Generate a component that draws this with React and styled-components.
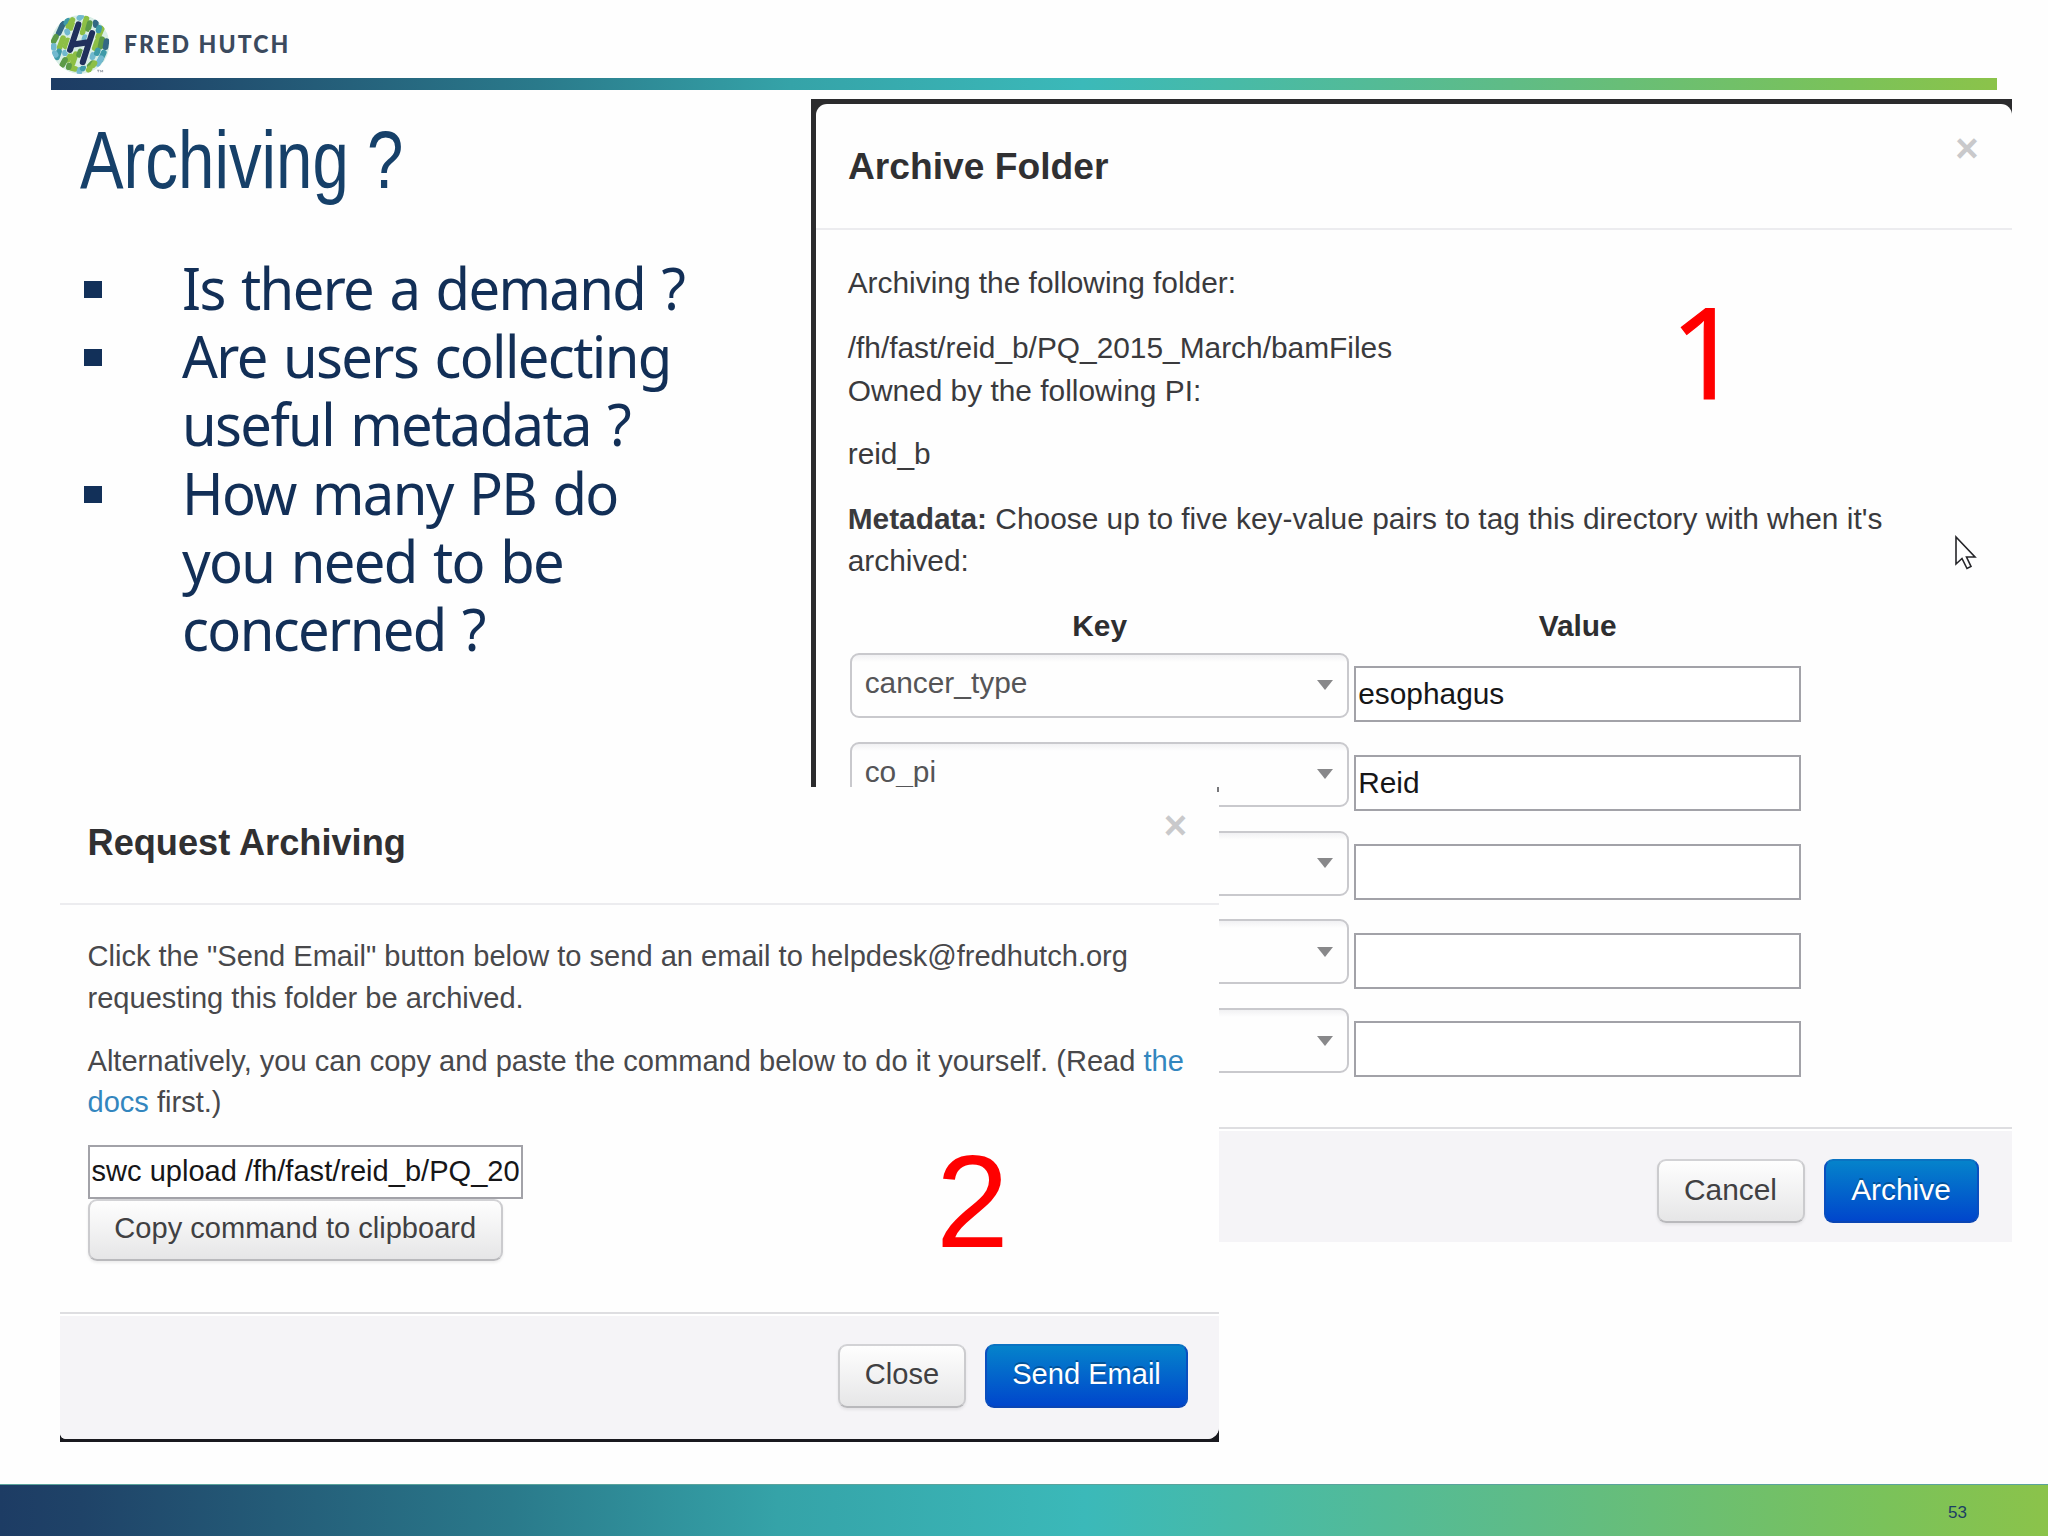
import React from "react";
import styled, { createGlobalStyle, css } from "styled-components";

const Global = createGlobalStyle`
  * { box-sizing: border-box; }
  body { margin: 0; background: #fefefe; }
`;

const sans = `"Liberation Sans", Arial, sans-serif`;
const brandGradient = css`
  background: linear-gradient(90deg, #1d3c64 0%, #1f4368 4%, #2a7a8b 25%, #35a3a8 38%, #3bb9b9 53%, #5fbc86 75%, #7ac25a 92%, #8bc34a 100%);
`;

const Slide = styled.div`
  position: relative;
  width: 2048px;
  height: 1536px;
  overflow: hidden;
  display: flex;
  flex-direction: column;
  background: #fefefe;
  font-family: ${sans};
`;

const Brand = styled.header`
  height: 78px;
  padding: 13px 0 0 51px;
  display: flex;
  align-items: flex-start;
`;

const BrandName = styled.span`
  margin: 14px 0 0 13px;
  font: 900 24.5px/34px Lato, "Open Sans", sans-serif;
  letter-spacing: 2.2px;
  color: #3b4a5e;
  white-space: nowrap;
  transform: scaleX(0.94);
  transform-origin: 0 0;
`;

const BrandBar = styled.div`
  height: 12px;
  margin: 0 51px;
  ${brandGradient}
`;

const Main = styled.main`
  flex: 1;
  padding: 22px 0 0 80px;
`;

const Title = styled.h1`
  margin: 0;
  font-size: 82px;
  font-weight: 400;
  line-height: 96px;
  color: #164069;
  white-space: nowrap;
  width: 420px;
  transform: scaleX(0.797);
  transform-origin: 0 0;
`;

const Points = styled.ul`
  list-style: none;
  margin: 45px 0 0;
  padding: 0;
  width: 640px;
`;

const Point = styled.li`
  display: flex;
  align-items: flex-start;
  padding-left: 4px;
`;

const Marker = styled.span`
  flex: none;
  width: 18px;
  height: 17px;
  margin: 28px 80px 0 0;
  background: #123059;
`;

const PointText = styled.div`
  width: 560px;
  font: 400 58.5px/68.2px "Noto Sans", "Open Sans", sans-serif;
  letter-spacing: -1.7px;
  word-spacing: 3.4px;
  white-space: nowrap;
  color: #122f57;
  transform: scaleX(0.96);
  transform-origin: 0 0;
`;

const Footer = styled.footer`
  height: 52px;
  flex: none;
  padding: 4px 81px 0 0;
  display: flex;
  align-items: center;
  justify-content: flex-end;
  font-size: 17px;
  color: #1b3f63;
  border-top: 1px solid #5aa39c;
  ${brandGradient}
`;

const Frame = styled.section`
  position: absolute;
  left: ${(p) => p.$x}px;
  top: ${(p) => p.$y}px;
  width: ${(p) => p.$w}px;
  height: ${(p) => p.$h}px;
  padding: ${(p) => p.$edge};
  background: ${(p) => p.$edgeColor};
`;

const Panel = styled.div`
  height: 100%;
  display: flex;
  flex-direction: column;
  background: #fefefe;
  border-radius: ${(p) => p.$radius};
  overflow: hidden;
  color: ${(p) => p.$ink};
  font-size: ${(p) => p.$size}px;
  line-height: ${(p) => p.$leading}px;
`;

const PanelHead = styled.header`
  height: ${(p) => p.$h}px;
  flex: none;
  display: flex;
  justify-content: space-between;
  align-items: flex-start;
  padding: ${(p) => p.$pad};
  border-bottom: 2px solid #ececef;
`;

const PanelTitle = styled.h2`
  margin: 0;
  font-size: ${(p) => p.$size}px;
  line-height: 64px;
  font-weight: 700;
  color: #303032;
`;

const Dismiss = styled.button`
  margin: ${(p) => p.$top}px 0 0;
  padding: 0;
  border: 0;
  background: none;
  font: 700 40px/40px ${sans};
  color: #c9c9cb;
`;

const PanelBody = styled.div`
  flex: 1;
  padding: ${(p) => p.$pad};
`;

const Para = styled.p`
  margin: 0 0 ${(p) => (p.$tight ? 0 : p.$gap)}px;
  white-space: nowrap;
`;

const DocLink = styled.a`
  color: #3386be;
`;

const Pairs = styled.div`
  display: grid;
  grid-template-columns: 499px 447px;
  column-gap: 5px;
  margin-left: 2.5px;
`;

const ColumnHead = styled.div`
  height: 47.5px;
  font-weight: 700;
  text-align: center;
  color: #2e2e30;
`;

const Cell = styled.div`
  height: 88.8px;
  padding-top: ${(p) => p.$drop || 0}px;
`;

const Select = styled.div`
  height: 65px;
  padding: 0 14px 4px 12.5px;
  display: flex;
  align-items: center;
  justify-content: space-between;
  border: 2px solid #c9c9cd;
  border-radius: 9px;
  background: linear-gradient(#f1f1f3 0, #fefefe 7px);
  color: #555557;
`;

const Caret = styled.span`
  margin-top: 4px;
  border: solid transparent;
  border-width: 10px 8px 0;
  border-top-color: #88888a;
`;

const Field = styled.input`
  display: block;
  width: ${(p) => p.$w};
  height: ${(p) => p.$h}px;
  padding: 0 2px 1px;
  border: 2px solid #a2a2a8;
  border-radius: 0;
  background: #fff;
  outline: 0;
  font: 400 ${(p) => p.$size}px ${sans};
  color: #161618;
`;

const PanelFoot = styled.footer`
  height: ${(p) => p.$h}px;
  flex: none;
  display: flex;
  justify-content: flex-end;
  align-items: flex-start;
  gap: 19px;
  padding: 30px ${(p) => p.$right}px 0 0;
  border-top: 2px solid #dedee1;
  background: #f5f4f7;
  box-shadow: inset 0 2px 0 #fff;
`;

const Button = styled.button`
  width: ${(p) => p.$w}px;
  height: ${(p) => p.$h || 64}px;
  padding: 0 0 3px;
  border: 2px solid;
  border-radius: 9px;
  font: 400 ${(p) => p.$size}px ${sans};
  white-space: nowrap;
  ${(p) =>
    p.$primary
      ? css`
          color: #fff;
          border-color: #0a73c2 #0a4fbf #0a45b4;
          background: linear-gradient(#0585cb, #0044cc) border-box;
          text-shadow: 0 -2px 0 rgba(0, 0, 0, 0.25);
        `
      : css`
          color: #404042;
          border-color: #d2d2d5 #cbcbce #b9b9bc;
          background: linear-gradient(#fefefe, #e6e6e7);
          box-shadow: 0 2px 3px rgba(0, 0, 0, 0.07);
        `}
`;

const StepNumber = styled.div`
  position: absolute;
  left: ${(p) => p.$x}px;
  top: ${(p) => p.$y}px;
  font-family: ${(p) => p.$face || sans};
  font-size: ${(p) => p.$size}px;
  line-height: 140px;
  color: #ff0000;
  -webkit-text-stroke: ${(p) => p.$stroke || 0}px #ff0000;
`;

const Pointer = styled.svg`
  position: absolute;
  left: 1954px;
  top: 535px;
`;

const CornerTick = styled.i`
  position: absolute;
  right: 0;
  top: 0;
  width: 2px;
  height: 5px;
  background: #77777a;
`;

const G = "#8dbf45";
const D = "#5c9a48";
const T = "#3f9aa8";
const L = "#72b9cf";
const N = "#336884";
const strokes = [
  [70, 72, 57, 100, N], [84, 62, 80, 70, T], [98, 61, 92, 72, G], [124, 50, 119, 55, L],
  [93, 84, 86, 80, G], [82, 95, 83, 98, L], [70, 115, 60, 142, G], [49, 111, 42, 124, D],
  [42, 138, 42, 144, L], [84, 122, 78, 140, G], [103, 77, 101, 84, G], [58, 155, 52, 172, T],
  [45, 160, 48, 165, L], [76, 158, 76, 160, L], [92, 168, 84, 180, G], [76, 180, 68, 195, D],
  [108, 163, 98, 192, G], [122, 155, 118, 165, D], [107, 207, 95, 204, G], [120, 210, 119, 216, L],
  [88, 197, 87, 202, D], [140, 56, 128, 98, G], [150, 70, 145, 88, D], [168, 68, 168, 76, N],
  [186, 86, 175, 112, G], [178, 84, 176, 92, T], [172, 125, 165, 145, G], [187, 118, 182, 140, D],
  [200, 124, 197, 142, N], [160, 165, 158, 172, L], [174, 152, 171, 160, T], [192, 158, 182, 180, T],
  [184, 175, 174, 192, L], [158, 190, 150, 198, D], [150, 205, 147, 210, G], [136, 112, 134, 118, L],
  [164, 190, 160, 196, G], [130, 204, 129, 206, T], [122, 84, 124, 82, G],
];

const Logo = () => (
  <svg width="59.5" height="63" viewBox="34 40 178 188" aria-label="Fred Hutch">
    <clipPath id="disc">
      <circle cx="121" cy="134" r="88" />
    </clipPath>
    <g clipPath="url(#disc)" strokeLinecap="round" strokeWidth="17">
      <circle cx="121" cy="134" r="88" fill="#d9eee6" />
      {strokes.map(([a, b, c, d, color], i) => (
        <line key={i} x1={a} y1={b} x2={c} y2={d} stroke={color} />
      ))}
      <g stroke="#20305c" strokeWidth="18">
        <g stroke="#e8f4ee" strokeWidth="22">
          <line x1="116" y1="74" x2="91" y2="150" />
          <line x1="157" y1="100" x2="129" y2="187" />
        </g>
        <line x1="116" y1="74" x2="91" y2="150" />
        <line x1="157" y1="100" x2="129" y2="187" />
        <line x1="100" y1="134" x2="146" y2="127" />
      </g>
    </g>
    <path d="M172 211h7m-3.500 0v6m7 0v-6l3 4 3-4v6" fill="none" stroke="#77808c" strokeWidth="2" />
  </svg>
);

const pairs = ["cancer_type", "co_pi", "", "", ""];
const values = ["esophagus", "Reid", "", "", ""];

export default function App() {
  return (
    <Slide>
      <Global />
      <Brand>
        <Logo />
        <BrandName>FRED HUTCH</BrandName>
      </Brand>
      <BrandBar />
      <Main>
        <Title>Archiving ?</Title>
        <Points>
          <Point>
            <Marker />
            <PointText>Is there a demand ?</PointText>
          </Point>
          <Point>
            <Marker />
            <PointText>
              Are users collecting
              <br />
              useful metadata ?
            </PointText>
          </Point>
          <Point>
            <Marker />
            <PointText>
              How many PB do
              <br />
              you need to be
              <br />
              concerned ?
            </PointText>
          </Point>
        </Points>
      </Main>
      <Footer>53</Footer>

      <Frame $x={811} $y={99} $w={1200.5} $h={1142.5} $edge="5px 0 0 5px" $edgeColor="#2b2b2d">
        <Panel $radius="11px 11px 0 0" $ink="#3a3a3d" $size={29.86} $leading={42.7}>
          <PanelHead $h={126} $pad="30px 33px 0 32px">
            <PanelTitle $size={37.2}>Archive Folder</PanelTitle>
            <Dismiss $top={-6}>×</Dismiss>
          </PanelHead>
          <PanelBody $pad="32.3px 0 0 31.7px">
            <Para $gap={21.8}>Archiving the following folder:</Para>
            <Para $tight>/fh/fast/reid_b/PQ_2015_March/bamFiles</Para>
            <Para $gap={21}>Owned by the following PI:</Para>
            <Para $gap={21.8}>reid_b</Para>
            <Para $gap={22.3}>
              <b>Metadata:</b> Choose up to five key-value pairs to tag this directory with when it's
              <br />
              archived:
            </Para>
            <Pairs>
              <ColumnHead>Key</ColumnHead>
              <ColumnHead>Value</ColumnHead>
              {pairs.map((key, i) => (
                <React.Fragment key={i}>
                  <Cell>
                    <Select>
                      <span>{key}</span>
                      <Caret />
                    </Select>
                  </Cell>
                  <Cell $drop={13.4}>
                    <Field readOnly $w="100%" $h={56} $size={29.86} defaultValue={values[i]} />
                  </Cell>
                </React.Fragment>
              ))}
            </Pairs>
          </PanelBody>
          <PanelFoot $h={114.5} $right={33}>
            <Button $w={148} $size={29.86}>Cancel</Button>
            <Button $w={155} $size={29.86} $primary>Archive</Button>
          </PanelFoot>
        </Panel>
      </Frame>
      <StepNumber $x={1670} $y={280} $size={126} $stroke={1.2} $face={`"Open Sans", sans-serif`}>1</StepNumber>
      <Pointer width="24" height="36" viewBox="0 0 24 36">
        <path
          d="M2 2v27l6-5.500 5 10 4-2-4.500-9.500H21z"
          fill="#fff"
          stroke="#252529"
          strokeWidth="1.600"
        />
      </Pointer>

      <Frame $x={59.5} $y={787} $w={1159.5} $h={655} $edge="0 0 3px" $edgeColor="#19191f">
        <Panel $radius="0 0 12px 6px" $ink="#48484b" $size={29.07} $leading={41.6}>
          <PanelHead $h={118} $pad="24px 32px 0 28px">
            <PanelTitle $size={36.2}>Request Archiving</PanelTitle>
            <Dismiss $top={-6}>×</Dismiss>
          </PanelHead>
          <PanelBody $pad="31.4px 0 0 28px">
            <Para $gap={21.2}>
              Click the "Send Email" button below to send an email to helpdesk@fredhutch.org
              <br />
              requesting this folder be archived.
            </Para>
            <Para $gap={20.8}>
              Alternatively, you can copy and paste the command below to do it yourself. (Read{" "}
              <DocLink>the</DocLink>
              <br />
              <DocLink>docs</DocLink> first.)
            </Para>
            <Field readOnly $w="435.5px" $h={54} $size={29.07} defaultValue="swc upload /fh/fast/reid_b/PQ_20" />
            <Button $w={415.5} $h={62} $size={29.07}>Copy command to clipboard</Button>
          </PanelBody>
          <PanelFoot $h={127} $right={31}>
            <Button $w={128} $size={29.07}>Close</Button>
            <Button $w={203} $size={29.07} $primary>Send Email</Button>
          </PanelFoot>
        </Panel>
        <CornerTick />
      </Frame>
      <StepNumber $x={936} $y={1132} $size={131}>2</StepNumber>
    </Slide>
  );
}
